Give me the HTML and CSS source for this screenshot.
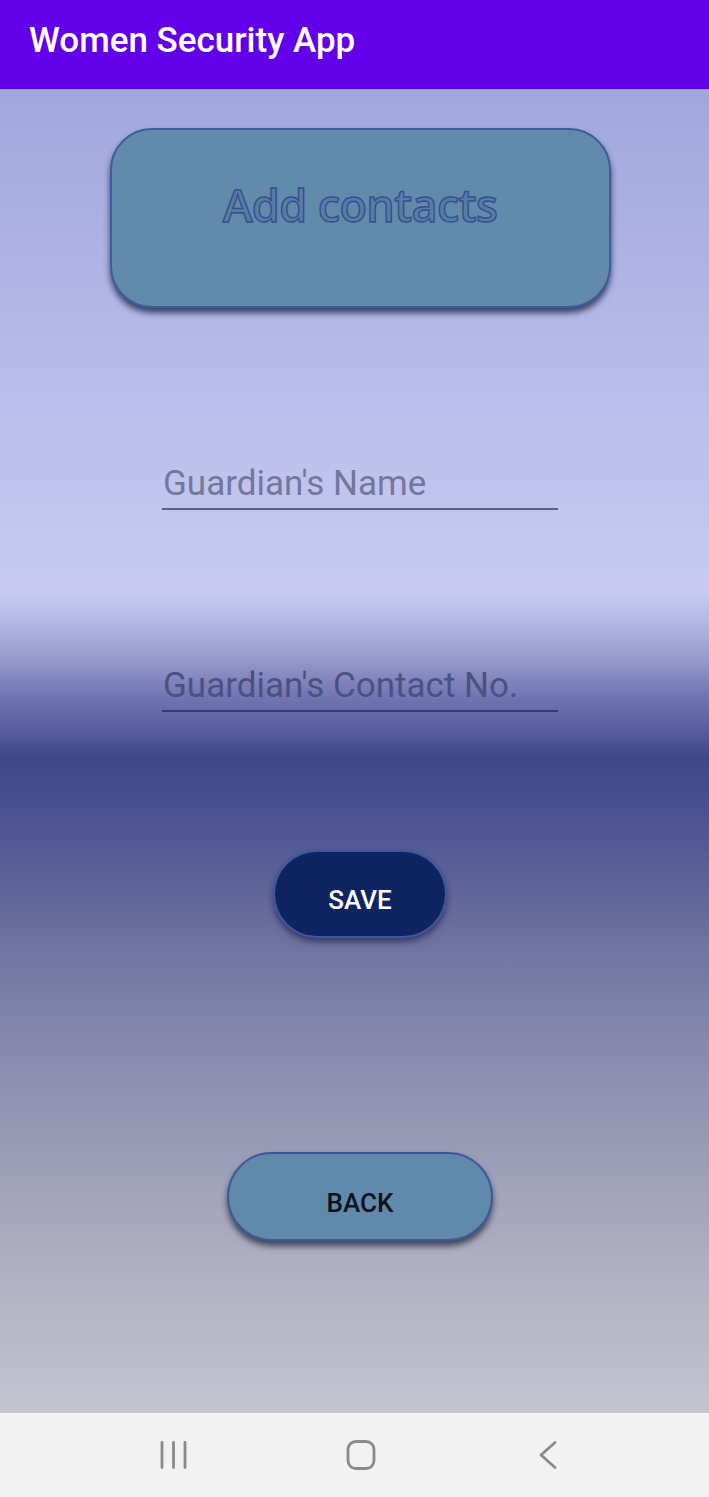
FILE: index.html
```html
<!DOCTYPE html>
<html>
<head>
<meta charset="utf-8">
<link rel="stylesheet" href="styles.css">
</head>
<body>
<div class="screen">
  <header class="appbar">Women Security App</header>
  <main class="content">
    <div class="title-card"><span class="title-text">Add contacts</span></div>
    <div class="field field-name"><span class="hint hint-light">Guardian's Name</span></div>
    <div class="field field-contact"><span class="hint hint-dark">Guardian's Contact No.</span></div>
    <button class="btn btn-save">SAVE</button>
    <button class="btn btn-back">BACK</button>
  </main>
  <nav class="navbar">
    <svg class="nav-icon" width="30" height="30" viewBox="0 0 30 30">
      <g stroke="#8a8a8a" stroke-width="2.8" stroke-linecap="round">
        <line x1="3" y1="2.5" x2="3" y2="27.5"/>
        <line x1="14.5" y1="2.5" x2="14.5" y2="27.5"/>
        <line x1="26" y1="2.5" x2="26" y2="27.5"/>
      </g>
    </svg>
    <svg class="nav-icon" width="30" height="30" viewBox="0 0 30 30">
      <rect x="2" y="1.5" width="26" height="27" rx="8" fill="none" stroke="#8a8a8a" stroke-width="2.8"/>
    </svg>
    <svg class="nav-icon" width="30" height="30" viewBox="0 0 30 30">
      <polyline points="22,2.5 8,15 22,27.5" fill="none" stroke="#8a8a8a" stroke-width="2.8" stroke-linecap="round" stroke-linejoin="round"/>
    </svg>
  </nav>
</div>
</body>
</html>
```

FILE: styles.css
```css
* { box-sizing: border-box; }
html, body { margin: 0; padding: 0; }
body { font-family: Roboto, "Liberation Sans", sans-serif; }

.screen {
  width: 709px;
  height: 1497px;
  display: flex;
  flex-direction: column;
  overflow: hidden;
}

.appbar {
  height: 89px;
  flex: none;
  background: #6200ea;
  color: #ffffff;
  font-family: Roboto, sans-serif;
  font-weight: 500;
  font-size: 35px;
  line-height: 40px;
  padding: 21px 0 0 29px;
}

.content {
  flex: 1;
  display: flex;
  flex-direction: column;
  align-items: center;
  padding-left: 11px;
  background: linear-gradient(to bottom,
    #a1a7dc 0px,
    #b5b9e8 250px,
    #c8cbef 504px,
    #b0b4e2 538px,
    #9599cb 571px,
    #7478b5 604px,
    #5a609f 638px,
    #3f4788 668px,
    #4a5190 720px,
    #656a9c 820px,
    #7f83a8 920px,
    #9a9cb6 1060px,
    #b2b3c4 1200px,
    #c3c4d0 1324px);
}

.title-card {
  margin-top: 39px;
  width: 501px;
  height: 180px;
  flex: none;
  background: #628aab;
  border: 2px solid #3d5e9c;
  border-radius: 42px;
  box-shadow: 0 5px 6px rgba(20, 25, 60, 0.75);
  display: flex;
  justify-content: center;
  padding-top: 45px;
}

.title-text {
  font-family: "Open Sans", "DejaVu Sans", sans-serif;
  font-weight: 600;
  font-size: 45px;
  line-height: 60px;
  color: #5a7ba6;
  -webkit-text-stroke: 1.4px #33508f;
  letter-spacing: -0.6px;
}

.field {
  width: 396px;
  height: 47px;
  flex: none;
  border-bottom: 2px solid #5a6186;
}
.field-name { margin-top: 155px; }
.field-contact { margin-top: 155px; border-bottom-color: #343c78; }

.hint {
  display: block;
  font-family: Roboto, sans-serif;
  font-size: 35px;
  line-height: 41px;
  padding-left: 1px;
}
.hint-light { color: #72789c; }
.hint-dark { color: #4a5380; }

.btn {
  flex: none;
  border-radius: 45px;
  font-family: Roboto, sans-serif;
  font-weight: 500;
  font-size: 26px;
  cursor: pointer;
}

.btn-save {
  margin-top: 138px;
  width: 174px;
  height: 88px;
  padding: 11px 0 0;
  background: #0f2461;
  border: 2px solid #3b5aa3;
  color: #ffffff;
  box-shadow: 0 4px 6px rgba(20, 25, 60, 0.6);
}

.btn-back {
  margin-top: 214px;
  width: 266px;
  height: 89px;
  padding: 13px 0 0;
  background: #6189aa;
  border: 2px solid #3a5a9a;
  color: #0c1220;
  box-shadow: 0 5px 6px rgba(20, 25, 50, 0.7);
}

.navbar {
  height: 84px;
  flex: none;
  background: #f2f2f2;
  display: flex;
  align-items: center;
  justify-content: center;
  gap: 157px;
  padding-left: 13px;
}
.nav-icon { display: block; }
```
